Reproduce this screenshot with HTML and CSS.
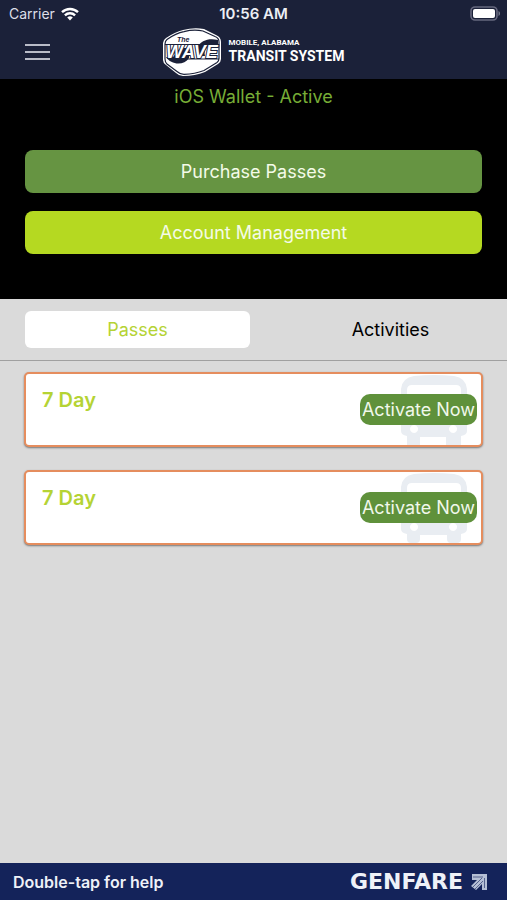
FILE: index.html
```html
<!DOCTYPE html>
<html lang="en">
<head>
    <meta charset="UTF-8">
    <meta name="viewport" content="width=device-width, initial-scale=1.0">
    <title>The Wave Transit System</title>
    <link rel="stylesheet" href="styles.css">
</head>
<body>
    <header class="header">
        <div class="status-bar">
            <div class="carrier">
                <span>Carrier</span>
                <svg width="18" height="14" viewBox="0 0 18 14" fill="none" stroke="#fff" stroke-width="2.4">
                    <path d="M1 5.2a11.6 11.6 0 0 1 16 0"/>
                    <path d="M3.9 8.3a7.4 7.4 0 0 1 10.2 0"/>
                    <path d="M9 13.6l-2.8-3a4 4 0 0 1 5.6 0z" fill="#fff" stroke="none"/>
                </svg>
            </div>
            <span class="time">10:56 AM</span>
            <svg class="battery" width="31" height="15" viewBox="0 0 31 15">
                <rect x="2" y="1" width="26" height="13" rx="4" fill="none" stroke="#66687e" stroke-width="1.6"/>
                <rect x="4" y="3" width="22" height="9" rx="2" fill="#fff"/>
                <path d="M29.5 5v5c2-.8 2-4.200 0-5z" fill="#777a8d"/>
            </svg>
        </div>
        <div class="nav-bar">
            <button class="menu-button" aria-label="Menu"><span></span><span></span><span></span></button>
            <div class="logo">
                <svg width="58" height="49" viewBox="0 0 58 49">
                    <path d="M20 2Q31-1 41 1L53 7Q58 9 58 14V31Q58 34 55 36L42 44Q32 48 20 48Q16 48 13 45L3 37Q0 35 0 32V15Q0 12 3 10Q12 4 20 2z" fill="#fff"/>
                    <path d="M21 3.600Q31 1 40 3L52 8.500Q56 10 56 14V30.500Q56 33 54 34.500L41 42.500Q32 46 21 46.300Q17 46.300 14 43.500L4 36Q2 34 2 31V16Q2 13 4 11.500Q13 5 21 3.600z" fill="none" stroke="#1b2139" stroke-width="1.2"/>
                    <path d="M55 12C46 10 38 12 34 20V28H42C40 21 46 16 55 17z" fill="#1b2139"/>
                    <path d="M3 29C8 37 21 38 26 30V20H18L10 29z" fill="#1b2139"/>
                    <path d="M2 16.500H37M24 31H56" fill="none" stroke="#1b2139" stroke-width="1"/>
                    <text class="badge-the" x="14" y="14">The</text>
                    <text class="badge-wave" x="3" y="30">WAVE</text>
                </svg>
                <div class="logo-text">
                    <span class="logo-place">MOBILE, ALABAMA</span>
                    <span class="logo-name">TRANSIT SYSTEM</span>
                </div>
            </div>
        </div>
    </header>

    <section class="wallet">
        <p class="wallet-status">iOS Wallet - Active</p>
        <button class="action purchase">Purchase Passes</button>
        <button class="action account">Account Management</button>
    </section>

    <nav class="tabs">
        <button class="tab-button active-tab">Passes</button>
        <button class="tab-button">Activities</button>
    </nav>

    <main class="pass-list">
        <article class="pass">
            <h2>7 Day</h2>
            <svg class="bus" width="68" height="70" viewBox="0 0 68 70">
                <path fill="#e9edf2" fill-rule="evenodd" d="M14 1Q34-1 54 1Q66 3 67 14V56Q67 60 61 61V70H46V62H20V70H7V61Q1 60 1 56V14Q2 3 14 1zM12 10Q7 10 7 15V40H61V15Q61 10 56 10zM14 50a4 4 0 1 0 .1 0zM53 50a4 4 0 1 0 .1 0z"/>
            </svg>
            <button class="activate">Activate Now</button>
        </article>
        <article class="pass">
            <h2>7 Day</h2>
            <svg class="bus" width="68" height="70" viewBox="0 0 68 70">
                <path fill="#e9edf2" fill-rule="evenodd" d="M14 1Q34-1 54 1Q66 3 67 14V56Q67 60 61 61V66Q61 70 57 70H51Q47 70 47 66V62H20V66Q20 70 16 70H11Q7 70 7 66V61Q1 60 1 56V14Q2 3 14 1zM12 10Q7 10 7 15V40H61V15Q61 10 56 10zM14 50a4 4 0 1 0 .1 0zM53 50a4 4 0 1 0 .1 0z"/>
            </svg>
            <button class="activate">Activate Now</button>
        </article>
    </main>

    <footer class="footer">
        <span class="help">Double-tap for help</span>
        <div class="brand">
            <span>GENFARE</span>
            <svg width="18" height="18" viewBox="0 0 18 18">
                <path d="M2 1H17V17H12V11L6 17L1 13L7 7H2z" fill="#b5bfd5"/>
                <path d="M3 4H13M14.500 5V15M3 14L12 5M5 16L13 8" fill="none" stroke="#14235a" stroke-width=".6"/>
            </svg>
        </div>
    </footer>
</body>
</html>
```
FILE: styles.css
```css
* {
    box-sizing: border-box;
}

body {
    font-family: Inter, "Liberation Sans", sans-serif;
    background-color: #dadada;
    margin: 0;
    min-height: 100vh;
    display: flex;
    flex-direction: column;
}

button {
    font-family: inherit;
    border: none;
    padding: 0;
    cursor: pointer;
}

.header {
    background-color: #1b2139;
    color: white;
    height: 79px;
}

.status-bar {
    display: grid;
    grid-template-columns: 1fr auto 1fr;
    align-items: center;
    height: 27px;
    padding: 0 7px;
    font-size: 14px;
}

.carrier {
    display: flex;
    align-items: center;
    gap: 6px;
    padding-left: 2px;
    color: #dddfe8;
}

.time {
    font-size: 15px;
    font-weight: 600;
    color: #eceef4;
}

.battery {
    justify-self: end;
}

.nav-bar {
    display: grid;
    grid-template-columns: 1fr auto 1fr;
    align-items: center;
    padding: 0 25px;
    height: 50px;
}

.menu-button {
    background: none;
    width: 25px;
    display: flex;
    flex-direction: column;
    gap: 5px;
}

.menu-button span {
    height: 2px;
    background-color: #b9bcc8;
}

.logo {
    display: flex;
    align-items: center;
    gap: 8px;
}

.logo-text {
    display: flex;
    flex-direction: column;
    font-family: Roboto, sans-serif;
    font-weight: bold;
    padding-bottom: 2px;
}

.logo-place {
    font-size: 8px;
    line-height: 11px;
}

.logo-name {
    font-size: 14px;
    line-height: 17px;
}

.badge-the {
    font: italic bold 7px "Liberation Sans", sans-serif;
    fill: #1b2139;
}

.badge-wave {
    font: italic bold 18px "Liberation Sans", sans-serif;
    fill: white;
    stroke: #1b2139;
    stroke-width: 2px;
    paint-order: stroke;
}

.wallet {
    background-color: black;
    display: flex;
    flex-direction: column;
    gap: 18px;
    padding: 6px 25px 45px;
}

.wallet-status {
    margin: 0 0 24px;
    text-align: center;
    color: #77ad36;
    font-size: 18px;
    line-height: 23px;
}

.action {
    height: 43px;
    border-radius: 8px;
    color: #f4fbe8;
    font-size: 18px;
}

.purchase {
    background-color: #669442;
}

.account {
    background-color: #b5d921;
}

.tabs {
    display: grid;
    grid-template-columns: 1fr 1fr;
    gap: 28px;
    padding: 12px 4px 12px 25px;
    border-bottom: 1px solid #a0a0a0;
}

.tab-button {
    height: 37px;
    border-radius: 6px;
    background: none;
    color: black;
    font-size: 18px;
}

.active-tab {
    background-color: white;
    color: #b5d334;
}

.pass-list {
    flex: 1;
    display: flex;
    flex-direction: column;
    gap: 23px;
    padding: 11px 24px;
}

.pass {
    position: relative;
    display: flex;
    justify-content: space-between;
    align-items: center;
    height: 75px;
    padding: 0 4px 0 16px;
    background-color: white;
    border: 2px solid #e58d5e;
    border-radius: 5px;
    box-shadow: 0 1px 2px #777;
}

.pass h2 {
    align-self: flex-start;
    margin: 12px 0 0;
    color: #b5d334;
    font-size: 20px;
    font-weight: 600;
    line-height: 28px;
}

/* bus sits behind the activate button */
.bus {
    position: absolute;
    right: 13px;
    top: 1px;
}

.activate {
    position: relative;
    width: 117px;
    height: 31px;
    border-radius: 10px;
    background-color: #5f913b;
    color: #f1f8eb;
    font-size: 18px;
}

.footer {
    display: flex;
    justify-content: space-between;
    align-items: center;
    height: 37px;
    padding: 0 19px 0 13px;
    background-color: #14235a;
    color: #eef1f8;
}

.help {
    font-size: 16px;
    font-weight: 600;
}

.brand {
    display: flex;
    align-items: center;
    gap: 7px;
    font-family: "DejaVu Sans", sans-serif;
    font-size: 22px;
    font-weight: bold;
}
```
